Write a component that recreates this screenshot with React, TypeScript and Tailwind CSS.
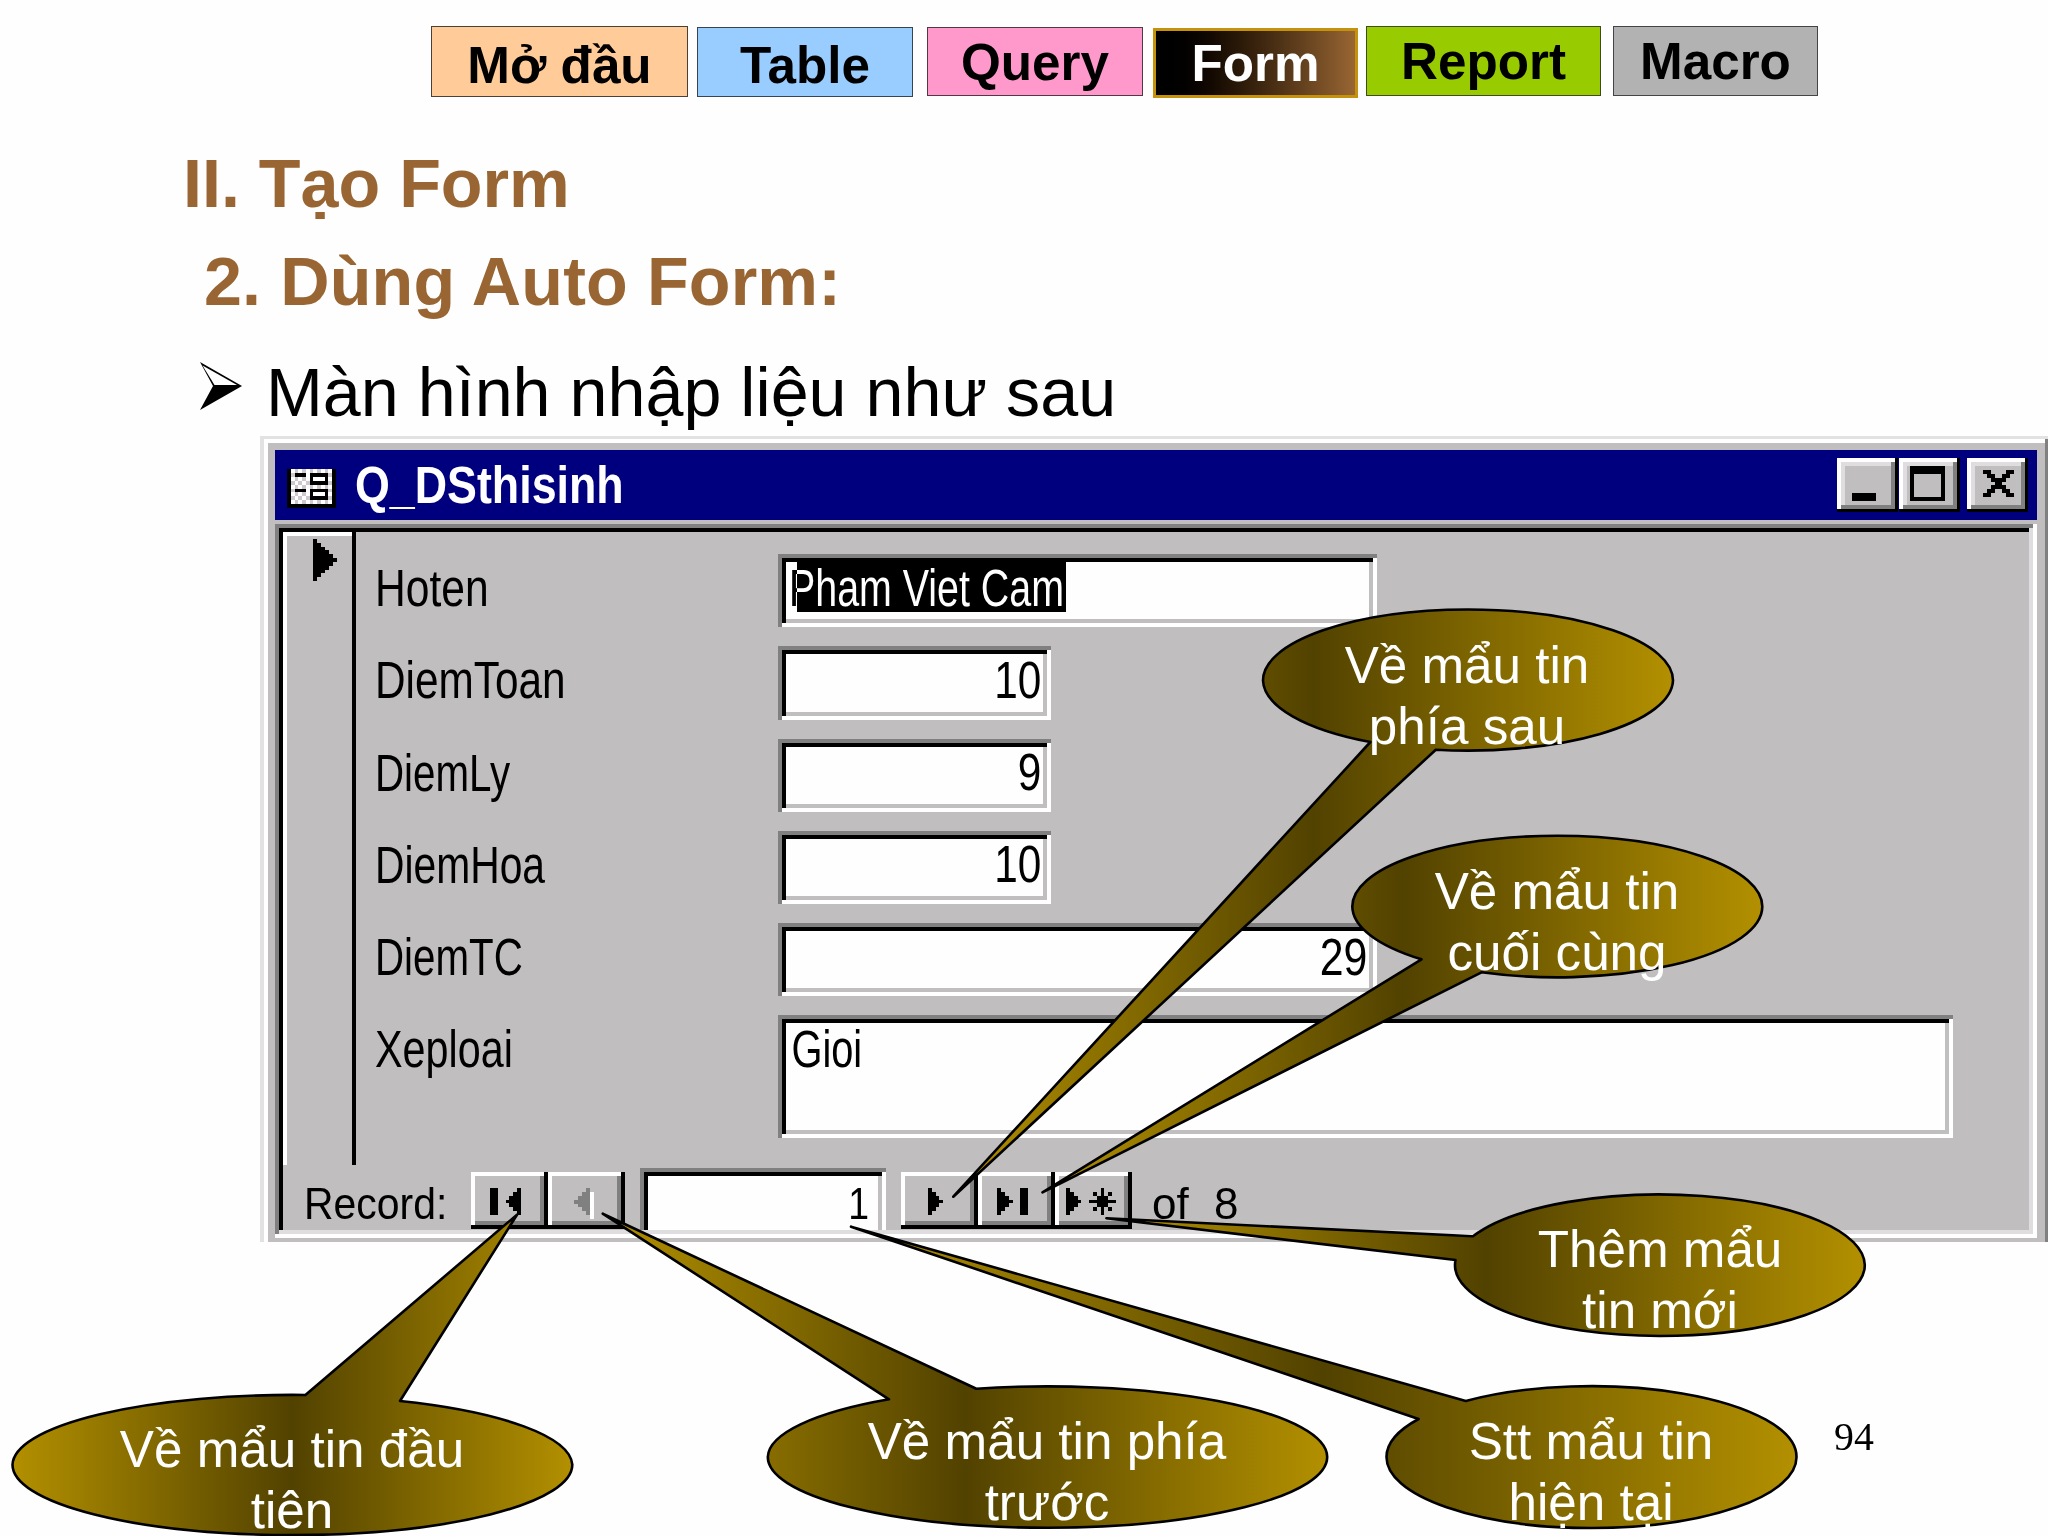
import type { JSX } from 'react'
import clsx from 'clsx'

const tabs = [
	{ label: 'Mở đầu', box: 'mt-[26px] w-[257px] h-[71px] pt-[8px] bg-[#ffcc99] border border-[#4a4038]' },
	{ label: 'Table', box: 'mt-[27px] ml-[9px] w-[216px] h-[70px] pt-[8px] bg-[#99ccff] border border-[#384450]' },
	{ label: 'Query', box: 'mt-[27px] ml-[14px] w-[216px] h-[69px] pt-[2px] bg-[#ff99cc] border border-[#503844]' },
	{ label: 'Form', box: 'mt-[28px] ml-[10px] w-[205px] h-[70px] pt-[2px] bg-linear-to-r from-black to-[#996633] border-[3px] border-[#c4920c] text-white' },
	{ label: 'Report', box: 'mt-[26px] ml-[8px] w-[235px] h-[70px] pt-[2px] bg-[#99cc00] border border-[#404a20]' },
	{ label: 'Macro', box: 'mt-[26px] ml-[12px] w-[205px] h-[70px] pt-[2px] bg-[#b2b2b2] border border-[#444444]' },
]

const rows = [
	{ label: 'DiemToan', value: '10', squeeze: 'scale-x-[.83]', box: 'w-[273px]', digits: 'scale-x-[.83]' },
	{ label: 'DiemLy', value: '9', squeeze: 'scale-x-[.79]', box: 'w-[273px]', digits: 'scale-x-[.83]' },
	{ label: 'DiemHoa', value: '10', squeeze: 'scale-x-[.80]', box: 'w-[273px]', digits: 'scale-x-[.83]' },
	{ label: 'DiemTC', value: '29', squeeze: 'scale-x-[.79]', box: 'w-[599px]', digits: 'scale-x-[.84]' },
]

const callouts = [
	{
		lines: ['Về mẩu tin', 'phía sau'],
		place: 'left-[1267px] top-[635px]',
		d: 'M1370.4 742 L953.3 1196.7 L1435.8 749.7 A205 71 0 0 0 1673 680.5 A205 71 0 0 0 1263 680.5 A205 71 0 0 0 1370.4 742 Z',
	},
	{
		lines: ['Về mẩu tin', 'cuối cùng'],
		place: 'left-[1357px] top-[861px]',
		d: 'M1421.5 959.3 L1042.5 1192.3 L1481.5 972.3 A205 70.8 0 0 0 1762.3 906.5 A205 70.8 0 0 0 1352.3 906.5 A205 70.8 0 0 0 1421.5 959.3 Z',
	},
	{
		lines: ['Thêm mẩu', 'tin mới'],
		place: 'left-[1460px] top-[1219px]',
		d: 'M1472.9 1236.3 L1106.4 1218.3 L1455.5 1260 A205 71 0 0 0 1659.8 1336 A205 71 0 0 0 1864.8 1265 A205 71 0 0 0 1472.9 1236.3 Z',
	},
	{
		lines: ['Stt mẩu tin', 'hiện tại'],
		place: 'left-[1391px] top-[1411px]',
		d: 'M1465.8 1401 L851 1226.7 L1418.6 1419 A205 70.8 0 0 0 1386.5 1457.3 A205 70.8 0 0 0 1796.5 1457.3 A205 70.8 0 0 0 1465.8 1401 Z',
	},
	{
		lines: ['Về mẩu tin phía', 'trước'],
		place: 'left-[847px] top-[1411px]',
		d: 'M976.3 1388.7 L602.7 1213.7 L889 1399.3 A279.7 70.8 0 0 0 767.8 1457 A279.7 70.8 0 0 0 1327.2 1457 A279.7 70.8 0 0 0 976.3 1388.7 Z',
	},
	{
		lines: ['Về mẩu tin đầu', 'tiên'],
		place: 'left-[92px] top-[1419px]',
		d: 'M400 1401 L517 1214.7 L305.4 1395 A279.9 70.4 0 0 0 12.5 1464.7 A279.9 70.4 0 0 0 572.3 1464.7 A279.9 70.4 0 0 0 400 1401 Z',
	},
]

const ink: Record<string, string> = { x: '#000000', w: '#ffffff', g: '#808080', c: '#cfc8cf' }

const formIcon = [
	'xwcwcwcwcwcwx',
	'xcxxxwxxxxxcx',
	'xwcwcwxwwwxwx',
	'xcwcwcxxxxxcx',
	'xwcwcwcwcwcwx',
	'xcxxxwxxxxxcx',
	'xwcwcwxwwwxwx',
	'xcwcwcxxxxxcx',
	'xwcwcwcwcwcwx',
	'xxxxxxxxxxxxx',
]
const closeIcon = ['xx....xx', '.xx..xx.', '..xxxx..', '...xx...', '..xxxx..', '.xx..xx.', 'xx....xx']
const selectorIcon = ['x.....', 'xx....', 'xxx...', 'xxxx..', 'xxxxx.', 'xxxxxx', 'xxxxx.', 'xxxx..', 'xxx...', 'xx....', 'x.....']
const firstIcon = ['xx.....x', 'xx....xx', 'xx...xxx', 'xx..xxxx', 'xx...xxx', 'xx....xx', 'xx.....x']
const prevIcon = ['...g.', '..ggw', '.gggw', 'ggggw', '.gggw', '..ggw', '...gw', '....w']
const nextIcon = ['x...', 'xx..', 'xxx.', 'xxxx', 'xxx.', 'xx..', 'x...']
const lastIcon = ['x.....xx', 'xx....xx', 'xxx...xx', 'xxxx..xx', 'xxx...xx', 'xx....xx', 'x.....xx']
const newIcon = [
	'x........x...',
	'xx.....x.x.x.',
	'xxx.....xxx..',
	'xxxx..xxxxxxx',
	'xxx.....xxx..',
	'xx.....x.x.x.',
	'x........x...',
]

function Pixels({ art, className }: { art: string[]; className: string }): JSX.Element {
	return (
		<svg className={clsx('block shrink-0', className)} viewBox={`0 0 ${art[0].length} ${art.length}`} preserveAspectRatio="none" shapeRendering="crispEdges">
			{art.flatMap((line, y) =>
				[...line].map((ch, x) => (ch === '.' ? null : <rect key={`${x}-${y}`} x={x} y={y} width={1} height={1} fill={ink[ch]} />)),
			)}
		</svg>
	)
}

function NavButton({ art, className, pad }: { art: string[]; className: string; pad: string }): JSX.Element {
	return (
		<button
			type="button"
			className={clsx(
				'mt-[7px] w-[77px] h-[57px] pt-[16px] flex items-start bg-[#c0bebf] shadow-[inset_-4px_-4px_#000,inset_4px_4px_#fff,inset_-8px_-8px_#808080]',
				pad,
			)}
		>
			<Pixels art={art} className={className} />
		</button>
	)
}

const winButton = 'flex items-start h-[54px] w-[61px] bg-[#c0bebf] shadow-[inset_-3px_-3px_#000,inset_4px_4px_#fff,inset_-7px_-7px_#808080,inset_8px_8px_#dfdde0]'
const sunken = 'bg-[#fefefe] p-[8px] shadow-[inset_4px_4px_#808080,inset_-4px_-4px_#fff,inset_8px_8px_#000,inset_-8px_-8px_#c0bebf]'
const rowLabel = 'w-[402px] mr-px pt-[2px] origin-left whitespace-nowrap leading-[66px]'

function FormWindow(): JSX.Element {
	return (
		<div className="mt-[4px] ml-[260px] w-[1788px] h-[806px] pt-[14px] pl-[15px] pr-[11px] bg-[#c0bebf] shadow-[inset_4px_3px_#e3e2e3,inset_-3px_0_#808080,inset_8px_7px_#fff]">
			{/* Title bar */}
			<div className="flex h-[70px] bg-[#00007f] pl-[12px] pr-[9px]">
				<Pixels art={formIcon} className="mt-[19px] w-[49px] h-[39px]" />
				<h2 className="ml-[19px] mt-[2px] w-[400px] origin-left scale-x-[.878] text-[51px] leading-[67px] font-bold text-white">Q_DSthisinh</h2>
				<div className="ml-auto mt-[8px] flex">
					<button type="button" className={clsx(winButton, 'pl-[15px] pt-[35px]')}>
						<span className="block w-[24px] h-[8px] bg-black" />
					</button>
					<button type="button" className={clsx(winButton, 'ml-px pl-[11px] pt-[8px]')}>
						<span className="block w-[35px] h-[35px] border-4 border-t-8 border-black" />
					</button>
					<button type="button" className={clsx(winButton, 'ml-[7px] pl-[16px] pt-[12px]')}>
						<Pixels art={closeIcon} className="w-[31px] h-[27px]" />
					</button>
				</div>
			</div>

			<div className="mt-[4px] h-[714px] p-[8px] shadow-[inset_-4px_-4px_#fff,inset_4px_4px_#808080,inset_-8px_-8px_#dfdde0,inset_8px_8px_#000]">
				<div className="flex h-[633px] text-[51px] text-black">
					{/* Record selector */}
					<div className="w-[73px] border-r-4 border-black">
						<div className="h-full pl-[30px] pt-[7px] shadow-[inset_4px_4px_#fff]">
							<Pixels art={selectorIcon} className="w-[24px] h-[42px]" />
						</div>
					</div>
					<div className="flex flex-col gap-[19px] pt-[22.3px] pl-[19px]">
						<div className="flex h-[73.2px]">
							<div className={clsx(rowLabel, 'scale-x-[.835]')}>Hoten</div>
							<div className={clsx(sunken, 'flex w-[599px] pl-[19px]')}>
								{/* inverted text, the first letter hangs out of the selection */}
								<div className="w-[269px] h-[50px] bg-black">
									<div className="w-[340px] -ml-[8px] pt-[2px] origin-left scale-x-[.772] whitespace-nowrap leading-[50px] text-white mix-blend-difference">Pham Viet Cam</div>
								</div>
							</div>
						</div>
						{rows.map((row) => (
							<div key={row.label} className="flex h-[73.2px]">
								<div className={clsx(rowLabel, row.squeeze)}>{row.label}</div>
								<div className={clsx(sunken, row.box)}>
									<div className={clsx('origin-right pt-[1.5px] pr-[2px] text-right leading-[50px]', row.digits)}>{row.value}</div>
								</div>
							</div>
						))}
						<div className="flex h-[122.5px]">
							<div className={clsx(rowLabel, 'scale-x-[.81]')}>Xeploai</div>
							<div className={clsx(sunken, 'w-[1175px]')}>
								<div className="origin-left scale-x-[.78] pt-[2px] pl-[7px] leading-[50px]">Gioi</div>
							</div>
						</div>
					</div>
				</div>

				{/* Record navigation */}
				<div className="flex h-[65px] text-[44px] text-black">
					<div className="ml-[21px] mt-[6px] w-[167px] origin-left scale-x-[.93] leading-[65px]">Record:</div>
					<NavButton art={firstIcon} className="w-[31px] h-[27px]" pad="pl-[19px]" />
					<NavButton art={prevIcon} className="w-[20px] h-[31px]" pad="pl-[26px]" />
					<div className="ml-[15px] mt-[3px] w-[246px] h-[62px] pt-[9px] pr-[17px] bg-[#fefefe] shadow-[inset_4px_4px_#808080,inset_-4px_0_#fff,inset_8px_8px_#000,inset_-8px_0_#c0bebf]">
						<div className="origin-right scale-x-[.85] text-right leading-[54px]">1</div>
					</div>
					<span className="w-[15px]" />
					<NavButton art={nextIcon} className="w-[15px] h-[27px]" pad="pl-[27px]" />
					<NavButton art={lastIcon} className="w-[31px] h-[27px]" pad="pl-[19px]" />
					<NavButton art={newIcon} className="w-[50px] h-[27px]" pad="pl-[11px]" />
					<div className="ml-[20px] mt-[6px] leading-[65px] [word-spacing:13px]">of 8</div>
				</div>
			</div>
		</div>
	)
}

export default function App(): JSX.Element {
	return (
		<div className="relative w-[2048px] h-[1536px] overflow-hidden bg-[#fefefe] font-['Liberation_Sans',Arial,sans-serif]">
			<nav className="flex h-[98px] pl-[431px] items-start">
				{tabs.map((tab) => (
					<div key={tab.label} className={clsx('flex shrink-0 items-center justify-center text-[51.2px] leading-none font-bold', tab.box)}>
						{tab.label}
					</div>
				))}
			</nav>

			<h1 className="mt-[36px] pl-[183px] text-[68.27px] leading-[98px] font-bold text-[#996633]">II. Tạo Form</h1>
			<h2 className="pl-[204px] text-[68.27px] leading-[98px] font-bold tracking-[0.15px] text-[#996633]">2. Dùng Auto Form:</h2>
			<div className="mt-[22px] flex pl-[199px] text-[68.27px] leading-[80px] text-black">
				<svg className="mt-[9px] mr-[23px] w-[44px] h-[50px]" viewBox="0 0 44 50">
					<path d="M1 1 L43 25 L1 49 L14 25 Z" fill="#000" />
					<path d="M3.5 4.5 L38 24 L15.5 24 Z" fill="#fefefe" />
				</svg>
				<p>Màn hình nhập liệu như sau</p>
			</div>

			<FormWindow />

			{/* Callouts pointing at the navigation buttons */}
			<svg className="absolute inset-0 w-[2048px] h-[1536px]" viewBox="0 0 2048 1536">
				<defs>
					<linearGradient id="gold">
						<stop offset="0" stopColor="#b39000" />
						<stop offset="0.5" stopColor="#524200" />
						<stop offset="1" stopColor="#b39000" />
					</linearGradient>
				</defs>
				{callouts.map((c) => (
					<path key={c.d} d={c.d} fill="url(#gold)" stroke="#000" strokeWidth={2.6} strokeLinejoin="round" />
				))}
			</svg>
			{callouts.map((c) => (
				<div key={c.place} className={clsx('absolute w-[400px] text-center text-[51.2px] leading-[61.4px] text-white', c.place)}>
					{c.lines[0]}
					<br />
					{c.lines[1]}
				</div>
			))}

			<div className="absolute left-[1834px] top-[1414px] text-[39.8px] leading-[46px] text-black font-['Liberation_Serif','Times_New_Roman',serif]">94</div>
		</div>
	)
}
